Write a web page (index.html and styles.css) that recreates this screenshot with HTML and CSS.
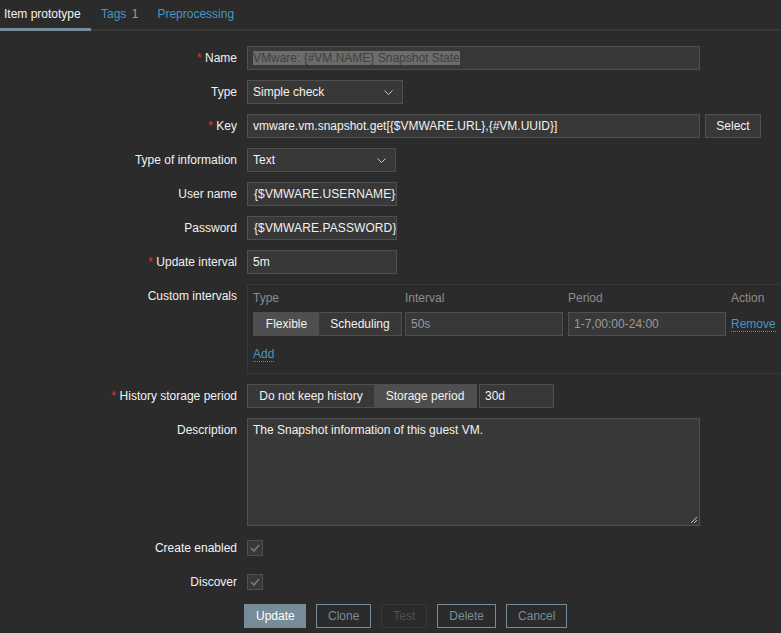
FILE: index.html
```html
<!DOCTYPE html>
<html>
<head>
<meta charset="utf-8">
<link rel="stylesheet" href="styles.css">
</head>
<body>
<div class="tabs">
  <a class="tab active">Item prototype</a>
  <a class="tab tab-tags">Tags <span class="count">1</span></a>
  <a class="tab">Preprocessing</a>
</div>
<div class="form">
  <div class="lbl"><span class="req">*</span> Name</div>
  <div class="fld"><div class="input w-wide ro"><span class="sel">VMware: {#VM.NAME} Snapshot State</span></div></div>

  <div class="lbl">Type</div>
  <div class="fld"><div class="select w-type">Simple check<svg class="chev" width="9" height="5" viewBox="0 0 9 5"><path d="M0.5 0.5 L4.5 4.5 L8.5 0.5" fill="none" stroke="#c8c8c8" stroke-width="1"/></svg></div></div>

  <div class="lbl"><span class="req">*</span> Key</div>
  <div class="fld row"><div class="input w-wide">vmware.vm.snapshot.get[{$VMWARE.URL},{#VM.UUID}]</div><button class="btn-alt">Select</button></div>

  <div class="lbl">Type of information</div>
  <div class="fld"><div class="select w-info">Text<svg class="chev" width="9" height="5" viewBox="0 0 9 5"><path d="M0.5 0.5 L4.5 4.5 L8.5 0.5" fill="none" stroke="#c8c8c8" stroke-width="1"/></svg></div></div>

  <div class="lbl">User name</div>
  <div class="fld"><div class="input w-small clip">{$VMWARE.USERNAME}</div></div>

  <div class="lbl">Password</div>
  <div class="fld"><div class="input w-small clip">{$VMWARE.PASSWORD}</div></div>

  <div class="lbl"><span class="req">*</span> Update interval</div>
  <div class="fld"><div class="input w-small">5m</div></div>

  <div class="lbl">Custom intervals</div>
  <div class="fld">
    <div class="intervals">
      <div class="ihead">
        <div class="c1">Type</div><div class="c2">Interval</div><div class="c3">Period</div><div class="c4">Action</div>
      </div>
      <div class="irow">
        <div class="c1"><div class="seg"><span class="on">Flexible</span><span>Scheduling</span></div></div>
        <div class="c2"><div class="input w-int dim">50s</div></div>
        <div class="c3"><div class="input w-int dim">1-7,00:00-24:00</div></div>
        <div class="c4"><a class="link">Remove</a></div>
      </div>
      <div class="iadd"><a class="link">Add</a></div>
    </div>
  </div>

  <div class="lbl"><span class="req">*</span> History storage period</div>
  <div class="fld row2"><div class="seg seg-h"><span class="b1">Do not keep history</span><span class="on b2">Storage period</span></div><div class="input w-hist">30d</div></div>

  <div class="lbl">Description</div>
  <div class="fld"><div class="textarea">The Snapshot information of this guest VM.<svg class="grip" width="8" height="8" viewBox="0 0 8 8"><path d="M1 7 L7 1 M4 7 L7 4" stroke="#bdbdbd" stroke-width="1" fill="none"/></svg></div></div>

  <div class="lbl">Create enabled</div>
  <div class="fld"><span class="cb"><svg width="12" height="10" viewBox="0 0 12 10"><path d="M2 5 L5 8 L10 2" fill="none" stroke="#6c7d87" stroke-width="1.6"/></svg></span></div>

  <div class="lbl">Discover</div>
  <div class="fld"><span class="cb"><svg width="12" height="10" viewBox="0 0 12 10"><path d="M2 5 L5 8 L10 2" fill="none" stroke="#6c7d87" stroke-width="1.6"/></svg></span></div>

  <div class="lbl"></div>
  <div class="fld buttons">
    <button class="btn-main">Update</button>
    <button class="btn-out">Clone</button>
    <button class="btn-dis">Test</button>
    <button class="btn-out">Delete</button>
    <button class="btn-out">Cancel</button>
  </div>
</div>
</body>
</html>
```

FILE: styles.css
```css
html, body {
  margin: 0;
  padding: 0;
  background: #2b2b2b;
  overflow: hidden;
}
body {
  font-family: "Liberation Sans", Arial, sans-serif;
  font-size: 12px;
  color: #f2f2f2;
  width: 781px;
  height: 633px;
}
.tabs {
  display: flex;
  height: 29px;
  border-bottom: 2px solid #383838;
}
.tab {
  display: block;
  padding: 0 10px;
  line-height: 28px;
  color: #4796c4;
  height: 29px;
  box-sizing: border-box;
}
.tab-tags { padding-right: 9px; }
.tab.active {
  color: #f2f2f2;
  padding: 0 10px 0 4px;
  width: 91px;
  border-bottom: 3px solid #768d99;
  height: 31px;
}
.count { color: #9a9a9a; margin-left: 2px; }
.form {
  display: grid;
  grid-template-columns: 247px 1fr;
  row-gap: 10px;
  padding-top: 15px;
}
.lbl {
  text-align: right;
  padding-right: 10px;
  line-height: 24px;
  white-space: nowrap;
}
.req { color: #e33734; }
.fld { min-height: 24px; }
.row { display: flex; gap: 5px; }
.row2 { display: flex; gap: 2px; }
.input, .select {
  box-sizing: border-box;
  height: 24px;
  line-height: 22px;
  background: #383838;
  border: 1px solid #4f4f4f;
  padding: 0 5px;
  color: #f2f2f2;
  white-space: nowrap;
  overflow: hidden;
}
.select { position: relative; }
.chev { position: absolute; right: 9px; top: 9px; }
.w-wide { width: 453px; }
.w-type { width: 156px; }
.w-info { width: 149px; }
.w-small { width: 150px; }
.w-int { width: 158px; }
.w-hist { width: 75px; }
.clip { padding-right: 0; padding-left: 6px; letter-spacing: 0.1px; }
.ro { color: #3e3e3e; }
.sel { background: #6c6c6c; color: #3f3f3f; }
.dim { color: #9a9a9a; }
.btn-alt {
  box-sizing: border-box;
  height: 24px;
  width: 56px;
  background: #383838;
  border: 1px solid #4f4f4f;
  color: #f2f2f2;
  font: inherit;
  padding: 0;
}
.intervals {
  box-sizing: border-box;
  width: 560px;
  height: 90px;
  border: 1px solid #383838;
  padding: 4px 5px 0 5px;
}
.ihead, .irow {
  display: grid;
  grid-template-columns: 152px 163px 163px 60px;
}
.ihead { line-height: 18px; color: #8c8c8c; }
.irow { margin-top: 5px; height: 24px; align-items: center; }
.iadd { margin-top: 9px; line-height: 18px; }
.link {
  color: #4796c4;
  text-decoration: none;
  border-bottom: 1px dotted #4796c4;
}
.seg {
  display: flex;
  box-sizing: border-box;
  height: 24px;
  width: 149px;
  border: 1px solid #4f4f4f;
  background: #383838;
}
.seg span {
  line-height: 22px;
  text-align: center;
}
.seg span:first-child { width: 65px; }
.seg span:last-child { flex: 1; }
.seg .on { background: #4e4e4e; }
.seg-h { width: 230px; }
.seg-h .b1 { width: 126px !important; flex: none !important; }
.seg-h .b2 { flex: 1; }
.textarea {
  position: relative;
  box-sizing: border-box;
  width: 453px;
  height: 108px;
  background: #383838;
  border: 1px solid #4f4f4f;
  padding: 3px 5px;
  line-height: 16px;
}
.grip { position: absolute; right: 1px; bottom: 1px; }
.cb {
  display: flex;
  align-items: center;
  justify-content: center;
  box-sizing: border-box;
  width: 16px;
  height: 16px;
  margin-top: 4px;
  background: #383838;
  border: 1px solid #4f4f4f;
}
.buttons {
  display: flex;
  gap: 10px;
  margin-left: -3px;
}
.buttons button {
  box-sizing: border-box;
  height: 24px;
  font: inherit;
  padding: 0 11px;
  background: transparent;
}
.btn-main {
  background: #768d99 !important;
  border: 1px solid #768d99;
  color: #ffffff;
  width: 62px;
}
.btn-out {
  border: 1px solid #768d99;
  color: #768d99;
}
.btn-dis {
  border: 1px solid #383838;
  color: #4f4f4f;
  width: 46px;
}
```
